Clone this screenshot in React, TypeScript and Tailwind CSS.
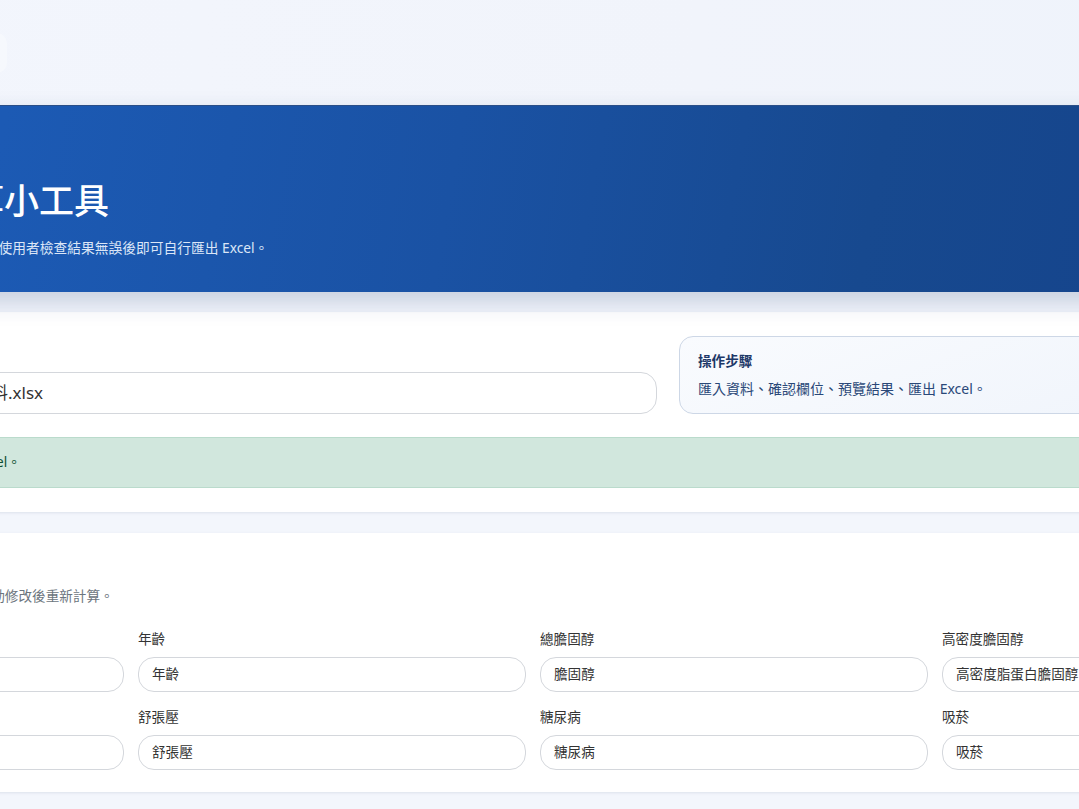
import React from "react";

const font = { fontFamily: '"Noto Sans", "Noto Sans CJK TC", sans-serif' };

function Field({ label, value }: { label: string; value: string }) {
  return (
    <div className="flex flex-col">
      <div className="h-[20px] leading-[20px] text-[13.6px] text-[#333] mb-[8px] whitespace-nowrap">{label}</div>
      <div className="h-[35px] rounded-[16px] border border-[#d4d7dc] bg-white flex items-center px-[13px] text-[13.6px] text-[#333] whitespace-nowrap overflow-hidden">
        {value}
      </div>
    </div>
  );
}

export default function App() {
  return (
    <div className="w-[1079px] h-[809px] overflow-hidden bg-[#f3f6fc]" style={font}>
      <div className="ml-[-300px] w-[1666px]">
        {/* top bar */}
        <div className="h-[105px] bg-[linear-gradient(90deg,#f3f6fd,#f1f4fb_60%,#eef3fb)] flex items-center pl-[250px]">
          <div className="w-[57px] h-[40px] rounded-[10px] bg-white/30"></div>
        </div>

        {/* hero */}
        <section className="h-[187px] border-t border-[#2b4f88] bg-[linear-gradient(100deg,#1f60bd_0%,#1c5ab4_18%,#1a52a4_45%,#17498f_70%,#14418a_100%)] shadow-[0_10px_22px_rgba(40,70,120,0.22)] pl-[164px] pt-[74px] relative z-10">
          <h1 className="text-[35px] leading-[42px] font-medium text-white whitespace-nowrap">風險計算小工具</h1>
          <p className="mt-[16px] ml-[-3px] text-[13.75px] leading-[20px] text-[#dbe6f7] whitespace-nowrap">
            匯入資料後自動計算，使用者檢查結果無誤後即可自行匯出 Excel。
          </p>
        </section>

        <main className="px-[12px] pt-[20px] pb-[20px] flex flex-col gap-[21px]">
          {/* card 1 */}
          <div className="bg-white rounded-[16px] shadow-[0_1px_3px_rgba(30,50,90,0.10)] px-[24px] pt-[24px] pb-[24px]">
            <div className="grid grid-cols-[921px_651px] gap-x-[22px] items-end">
              <div className="flex flex-col">
                <div className="h-[20px] leading-[20px] text-[13.6px] font-semibold text-[#1e3a6e] mb-[16px]">選擇 Excel 檔案</div>
                <div className="h-[42px] rounded-[16px] border border-[#d4d7dc] bg-white flex items-center pl-[16px] text-[17px] text-[#333] whitespace-nowrap overflow-hidden">
                  已選擇：心血管疾病風險評估資料.xlsx
                </div>
              </div>
              <div className="h-[78px] rounded-[14px] border border-[#cdd7e6] bg-[linear-gradient(160deg,#f9fbfe,#eef3fb)] px-[18px] pt-[14px]">
                <div className="h-[20px] leading-[20px] text-[13.6px] font-bold text-[#1d3868]">操作步驟</div>
                <div className="mt-[8px] h-[20px] leading-[20px] text-[14px] text-[#2a4878] whitespace-nowrap">
                  匯入資料、確認欄位、預覽結果、匯出 Excel。
                </div>
              </div>
            </div>
            <div className="mt-[23px] h-[51px] rounded-[10px] border border-[#badbcc] bg-[#d1e7dd] flex items-center pl-[17px] text-[13.6px] text-[#0f5132] whitespace-nowrap">
              檔案已成功匯入，請確認欄位後匯出 Excel。
            </div>
          </div>

          {/* card 2 */}
          <div className="bg-white rounded-[16px] shadow-[0_1px_3px_rgba(30,50,90,0.10)] px-[24px] pt-[24px] pb-[22px]">
            <div className="h-[24px] leading-[24px] text-[16px] font-bold text-[#1e3a6e]">欄位對應</div>
            <div className="mt-[5px] h-[20px] leading-[20px] text-[13.6px] text-[#6c757d] whitespace-nowrap ml-[-3px]">
              欄位已依標題名稱自動對應，如有錯誤請手動修改後重新計算。
            </div>
            <div className="mt-[23px] grid grid-cols-4 gap-x-[14px] gap-y-[15px]">
              <Field label="性別" value="性別" />
              <Field label="年齡" value="年齡" />
              <Field label="總膽固醇" value="膽固醇" />
              <Field label="高密度膽固醇" value="高密度脂蛋白膽固醇" />
              <Field label="收縮壓" value="收縮壓" />
              <Field label="舒張壓" value="舒張壓" />
              <Field label="糖尿病" value="糖尿病" />
              <Field label="吸菸" value="吸菸" />
            </div>
          </div>
        </main>
      </div>
    </div>
  );
}
